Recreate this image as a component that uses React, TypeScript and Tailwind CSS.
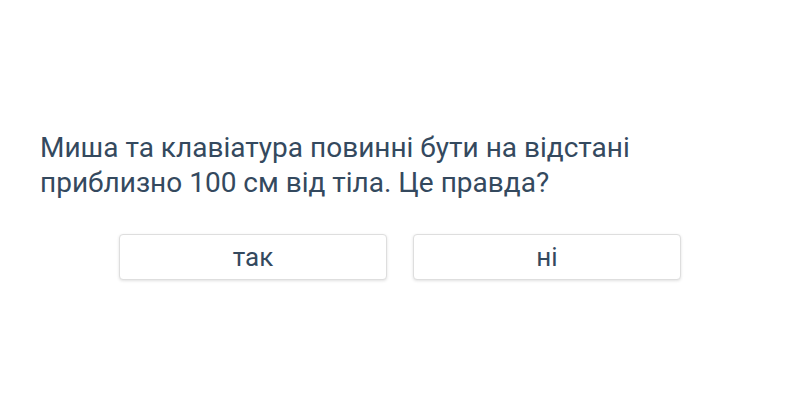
export default function App() {
  return (
    <div className="min-h-screen bg-white px-10 pt-[130px] font-['Roboto',sans-serif] text-[#34495e]">
      <p className="max-w-[660px] text-[28px] leading-[35px]">
        Миша та клавіатура повинні бути на відстані приблизно 100 см від тіла. Це правда?
      </p>
      <div className="mt-[34px] flex justify-center gap-[26px]">
        <button className="h-[46px] w-[268px] rounded-[4px] border border-[#dedede] bg-white text-[26px] leading-none shadow-[0_1px_3px_rgba(0,0,0,0.12)]">
          так
        </button>
        <button className="h-[46px] w-[268px] rounded-[4px] border border-[#dedede] bg-white text-[26px] leading-none shadow-[0_1px_3px_rgba(0,0,0,0.12)]">
          ні
        </button>
      </div>
    </div>
  );
}
